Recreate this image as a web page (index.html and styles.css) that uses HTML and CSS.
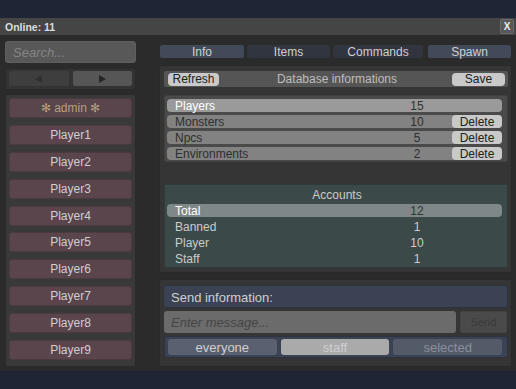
FILE: index.html
```html
<!DOCTYPE html>
<html>
<head>
<meta charset="utf-8">
<link rel="stylesheet" href="styles.css">
</head>
<body>
<div class="window">
  <div class="titlebar">
    <span class="title">Online: 11</span>
    <span class="close">X</span>
  </div>
  <div class="content">
    <div class="left">
      <div class="search">Search...</div>
      <div class="nav">
        <div class="navbtn prev"><svg width="8" height="8" viewBox="0 0 8 8"><polygon points="7,0 7,8 0,4" fill="#303030"/></svg></div>
        <div class="navbtn next"><svg width="8" height="8" viewBox="0 0 8 8"><polygon points="1,0 1,8 8,4" fill="#262626"/></svg></div>
      </div>
      <div class="players">
        <div class="pbtn admin">✻ admin ✻</div>
        <div class="pbtn">Player1</div>
        <div class="pbtn">Player2</div>
        <div class="pbtn">Player3</div>
        <div class="pbtn">Player4</div>
        <div class="pbtn">Player5</div>
        <div class="pbtn">Player6</div>
        <div class="pbtn">Player7</div>
        <div class="pbtn">Player8</div>
        <div class="pbtn">Player9</div>
      </div>
    </div>
    <div class="right">
      <div class="tabs">
        <div class="tab active t1">Info</div>
        <div class="tab t2">Items</div>
        <div class="tab t3">Commands</div>
        <div class="tab active t4">Spawn</div>
      </div>
      <div class="main">
        <div class="dbhead">
          <div class="btn">Refresh</div>
          <div class="dbtitle">Database informations</div>
          <div class="btn save">Save</div>
        </div>
        <div class="dbtable">
          <div class="row hl"><span class="name">Players</span><span class="val">15</span><span class="del none"></span></div>
          <div class="row"><span class="name">Monsters</span><span class="val">10</span><span class="del">Delete</span></div>
          <div class="row"><span class="name">Npcs</span><span class="val">5</span><span class="del">Delete</span></div>
          <div class="row"><span class="name">Environments</span><span class="val">2</span><span class="del">Delete</span></div>
        </div>
        <div class="accounts">
          <div class="acctitle">Accounts</div>
          <div class="arow hl"><span class="name">Total</span><span class="val">12</span></div>
          <div class="arow"><span class="name">Banned</span><span class="val">1</span></div>
          <div class="arow"><span class="name">Player</span><span class="val">10</span></div>
          <div class="arow"><span class="name">Staff</span><span class="val">1</span></div>
        </div>
      </div>
      <div class="send">
        <div class="sendbar">Send information:</div>
        <div class="inputrow">
          <div class="msg">Enter message...</div>
          <div class="sendbtn">Send</div>
        </div>
        <div class="radios">
          <div class="radio r1">everyone</div>
          <div class="radio r2 on">staff</div>
          <div class="radio r3">selected</div>
        </div>
      </div>
    </div>
  </div>
</div>
</body>
</html>
```
FILE: styles.css
```css
* { box-sizing: border-box; }
html, body { margin: 0; padding: 0; }
body {
  width: 516px;
  height: 389px;
  background: #1f2534;
  font-family: "Liberation Sans", Arial, sans-serif;
  font-size: 12px;
  color: #cccccc;
  padding-top: 18px;
  overflow: hidden;
}
.window {
  height: 353px;
  background: #2b2b2b;
}
.titlebar {
  height: 17px;
  background: #454545;
  display: flex;
  align-items: center;
  justify-content: space-between;
  padding: 0 2px 0 5px;
}
.title {
  font-weight: bold;
  font-size: 10.5px;
  color: #dddddd;
}
.close {
  width: 14px;
  height: 15px;
  background: #585858;
  border: 1px solid #6a6a6a;
  border-radius: 2px;
  font-size: 10px;
  font-weight: bold;
  color: #eeeeee;
  display: flex;
  align-items: center;
  justify-content: center;
}
.content {
  display: flex;
  padding: 6px 4px 0 5px;
}
.left {
  width: 131px;
  display: flex;
  flex-direction: column;
}
.search {
  height: 22px;
  background: #585858;
  border: 1px solid #5e5e5e;
  border-radius: 3px;
  font-style: italic;
  font-size: 13px;
  color: #858585;
  padding: 3px 0 0 7px;
}
.nav {
  margin-top: 5px;
  height: 22px;
  background: #333333;
  border: 1px solid #2a2a2a;
  border-radius: 2px;
  display: flex;
  gap: 4px;
  padding: 2px 3px 3px 3px;
}
.navbtn {
  flex: 1;
  border-radius: 2px;
  display: flex;
  align-items: center;
  justify-content: center;
}
.prev { background: #3e3e3e; }
.next { background: #565656; }
.players {
  margin-top: 4px;
  height: 273px;
  background: #393939;
  border: 1px solid #2a2a2a;
  border-radius: 2px;
  padding: 3px 3px 0 3px;
  display: flex;
  flex-direction: column;
  gap: 6.9px;
}
.pbtn {
  height: 20px;
  flex: none;
  background: #5a454c;
  border: 1px solid #4b3a40;
  border-radius: 3px;
  display: flex;
  align-items: center;
  justify-content: center;
  font-size: 12px;
  color: #cfcfcf;
}
.pbtn.admin { color: #b5a07f; }
.right {
  margin-left: 23px;
  width: 353px;
  display: flex;
  flex-direction: column;
}
.tabs {
  margin-top: 4px;
  height: 13px;
  display: flex;
  padding-left: 1px;
}
.tab {
  height: 13px;
  background: #30353f;
  border-radius: 2px;
  display: flex;
  align-items: center;
  justify-content: center;
  font-size: 12px;
  color: #cfcfcf;
}
.tab.active { background: #424959; }
.t1 { width: 84px; margin-right: 3px; }
.t2 { width: 83px; margin-right: 3px; }
.t3 { width: 90px; margin-right: 5px; }
.t4 { width: 83px; }
.main {
  margin-top: 7px;
  height: 208px;
  background: #353535;
  border: 1px solid #292929;
  border-radius: 2px;
  padding: 5px 3px 0 4px;
}
.dbhead {
  height: 16px;
  background: #555555;
  border-radius: 2px;
  display: flex;
  align-items: center;
  padding: 0 3px 0 4px;
}
.btn {
  height: 13px;
  width: 51px;
  background: #c9c9c9;
  border-radius: 4px;
  color: #222222;
  font-size: 12px;
  display: flex;
  align-items: center;
  justify-content: center;
}
.dbtitle {
  flex: 1;
  text-align: center;
  color: #bdbdbd;
  font-size: 12px;
  padding-left: 3px;
}
.save { width: 53px; }
.dbtable {
  margin-top: 8px;
  height: 67px;
  background: #4a4a4a;
  border: 1px solid #3e3e3e;
  border-radius: 2px;
  padding: 3px 5px 0 2px;
  display: flex;
  flex-direction: column;
  gap: 3px;
}
.row {
  height: 13px;
  background: #828282;
  border-radius: 4px;
  display: flex;
  align-items: center;
  color: #2e2e2e;
  font-size: 12px;
}
.row.hl { background: #9a9a9a; color: #ffffff; }
.row.hl .val { color: #333333; }
.name { flex: 1; padding-left: 8px; }
.val { width: 60px; text-align: center; margin-right: 5px; }
.del {
  width: 50px;
  height: 13px;
  background: #c9c9c9;
  border-radius: 4px;
  display: flex;
  align-items: center;
  justify-content: center;
  color: #222222;
}
.del.none { background: transparent; }
.accounts {
  margin-top: 22px;
  height: 84px;
  background: #3b4949;
  border: 1px solid #2f3a3a;
  border-radius: 2px;
  padding: 2px 5px 0 2px;
}
.acctitle {
  height: 17px;
  text-align: center;
  color: #cccccc;
  font-size: 12px;
  padding-top: 1px;
  padding-left: 5px;
}
.arow {
  height: 13px;
  margin-bottom: 3px;
  border-radius: 4px;
  display: flex;
  align-items: center;
  color: #cccccc;
  font-size: 12px;
}
.arow.hl { background: #7e8888; color: #ffffff; }
.arow.hl .val { color: #333333; }
.arow .val { margin-right: 55px; }
.send {
  margin-top: 6px;
  height: 88px;
  background: #353535;
  border: 1px solid #292929;
  border-radius: 2px;
  padding: 5px 3px 0 3px;
}
.sendbar {
  height: 23px;
  background: #3a4253;
  border: 1px solid #2c333f;
  border-radius: 3px;
  font-size: 13px;
  color: #cfcfcf;
  padding: 4px 0 0 7px;
}
.inputrow {
  margin-top: 3px;
  height: 22px;
  display: flex;
  gap: 4px;
  padding-left: 1px;
}
.msg {
  width: 292px;
  background: #6b6b6b;
  border-radius: 3px;
  font-style: italic;
  font-size: 13px;
  color: #454545;
  padding: 4px 0 0 7px;
}
.sendbtn {
  width: 47px;
  background: #4a4a4a;
  border: 1px solid #444444;
  border-radius: 2px;
  font-size: 11px;
  color: #3a3a3a;
  display: flex;
  align-items: center;
  justify-content: center;
}
.radios {
  margin-top: 3px;
  height: 22px;
  background: #3a4253;
  border: 1px solid #2c333f;
  border-radius: 3px;
  display: flex;
  gap: 4px;
  padding: 2px 5px 2px 3px;
  margin-left: 1px;
}
.radio {
  flex: 1;
  border-radius: 3px;
  display: flex;
  align-items: center;
  justify-content: center;
  font-size: 13px;
}
.r1 { background: #596170; color: #d0d0d0; }
.r2 { background: #aaaaaa; color: #cfcfcf; }
.r3 { background: #535b69; color: #8a8f98; }
```
